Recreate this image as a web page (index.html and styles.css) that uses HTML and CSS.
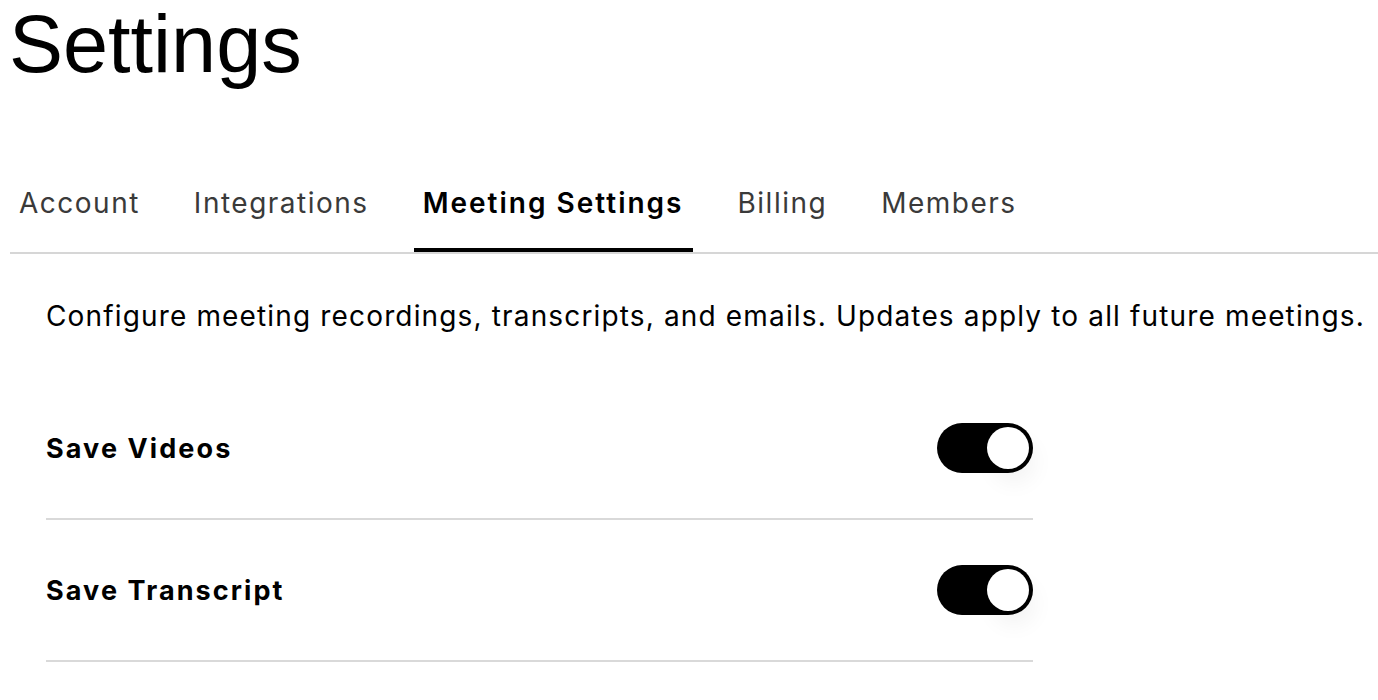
FILE: index.html
```html
<!DOCTYPE html>
<html>
<head>
<meta charset="utf-8">
<link rel="stylesheet" href="styles.css">
</head>
<body>
<h1 class="title">Settings</h1>
<nav class="tabs">
  <a class="tab">Account</a>
  <a class="tab">Integrations</a>
  <a class="tab tab-active">Meeting Settings</a>
  <a class="tab">Billing</a>
  <a class="tab">Members</a>
</nav>
<section class="panel">
  <p class="intro">Configure meeting recordings, transcripts, and emails. Updates apply to all future meetings.</p>
  <div class="rows">
    <div class="row">
      <span class="row-label">Save Videos</span>
      <span class="toggle"><span class="knob"></span></span>
    </div>
    <div class="row">
      <span class="row-label">Save Transcript</span>
      <span class="toggle"><span class="knob"></span></span>
    </div>
  </div>
</section>
</body>
</html>
```

FILE: styles.css
```css
html, body {
  margin: 0;
  padding: 0;
  background: #ffffff;
  overflow: hidden;
}
body {
  font-family: "Inter", "Liberation Sans", sans-serif;
  color: #000;
}
.title {
  font-family: "Liberation Sans", Arial, sans-serif;
  font-weight: 400;
  font-size: 81px;
  line-height: 80px;
  margin: 4px 0 0 9px;
}
.tabs {
  display: flex;
  margin: 102px 0 0 10px;
  border-bottom: 2px solid #d6d6d6;
}
.tab {
  font-size: 28px;
  line-height: 34px;
  color: #3a3a3a;
  padding: 0 9px 28px;
  margin-right: 36px;
  border-bottom: 4px solid transparent;
  letter-spacing: 1.5px;
}
.tab-active {
  color: #000;
  font-weight: 600;
  letter-spacing: 2px;
  border-bottom-color: #000;
}
.panel {
  margin-left: 10px;
  padding: 45px 0 0 36px;
}
.intro {
  margin: 0;
  font-size: 28px;
  line-height: 34px;
  letter-spacing: 1.15px;
  white-space: nowrap;
}
.rows {
  width: 987px;
  margin-top: 45px;
}
.row {
  display: flex;
  align-items: center;
  justify-content: space-between;
  padding: 45px 0;
  border-bottom: 2px solid #d9d9d9;
}
.row-label {
  font-size: 27px;
  font-weight: 700;
  letter-spacing: 2.1px;
}
.toggle {
  position: relative;
  width: 96px;
  height: 50px;
  border-radius: 25px;
  background: #000;
  flex: none;
}
.knob {
  position: absolute;
  top: 4px;
  right: 4px;
  width: 42px;
  height: 42px;
  border-radius: 50%;
  background: #fff;
  box-shadow: 6px 14px 22px rgba(0, 0, 0, 0.05);
}
```
